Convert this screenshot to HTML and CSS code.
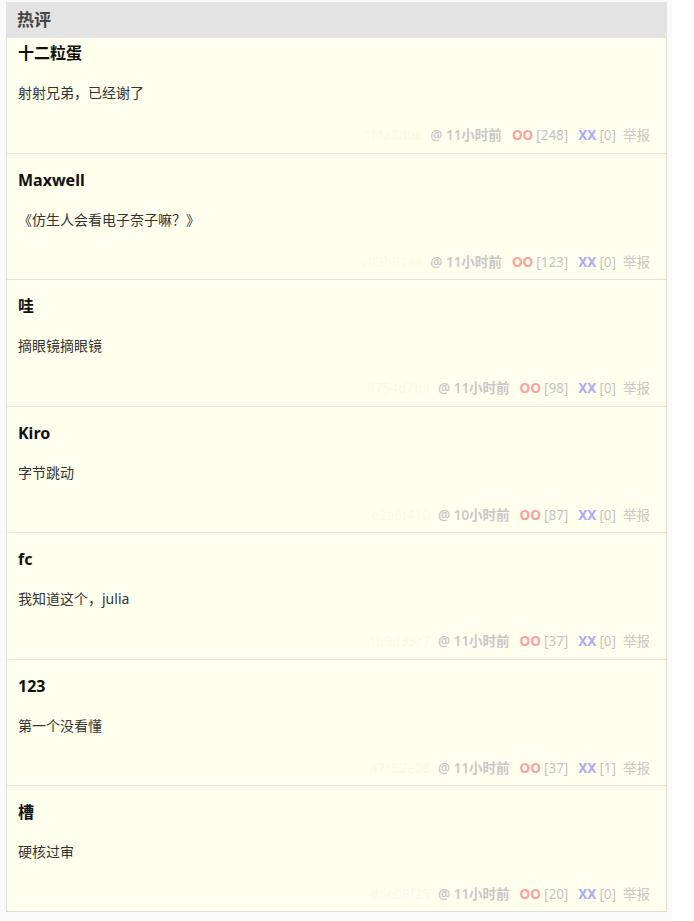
FILE: index.html
```html
<!DOCTYPE html>
<html lang="zh">
<head>
<meta charset="utf-8">
<title>热评</title>
<link rel="stylesheet" href="styles.css">
</head>
<body>
<div class="panel">
  <div class="panel-head">热评</div>
  <div class="item">
    <div class="author">十二粒蛋</div>
    <div class="text">射射兄弟，已经谢了</div>
    <div class="meta"><span class="hash">5f4a8d0e</span><span class="time">@ 11小时前</span><span class="oo">OO</span><span class="cnt">[248]</span><span class="xx">XX</span><span class="cnt">[0]</span><span class="rep">举报</span></div>
  </div>
  <div class="item">
    <div class="author">Maxwell</div>
    <div class="text">《仿生人会看电子奈子嘛？》</div>
    <div class="meta"><span class="hash">c03b91aa</span><span class="time">@ 11小时前</span><span class="oo">OO</span><span class="cnt">[123]</span><span class="xx">XX</span><span class="cnt">[0]</span><span class="rep">举报</span></div>
  </div>
  <div class="item">
    <div class="author">哇</div>
    <div class="text">摘眼镜摘眼镜</div>
    <div class="meta"><span class="hash">8754d7b3</span><span class="time">@ 11小时前</span><span class="oo">OO</span><span class="cnt">[98]</span><span class="xx">XX</span><span class="cnt">[0]</span><span class="rep">举报</span></div>
  </div>
  <div class="item">
    <div class="author">Kiro</div>
    <div class="text">字节跳动</div>
    <div class="meta"><span class="hash">e2a6f410</span><span class="time">@ 10小时前</span><span class="oo">OO</span><span class="cnt">[87]</span><span class="xx">XX</span><span class="cnt">[0]</span><span class="rep">举报</span></div>
  </div>
  <div class="item">
    <div class="author">fc</div>
    <div class="text">我知道这个，julia</div>
    <div class="meta"><span class="hash">1b9d33c7</span><span class="time">@ 11小时前</span><span class="oo">OO</span><span class="cnt">[37]</span><span class="xx">XX</span><span class="cnt">[0]</span><span class="rep">举报</span></div>
  </div>
  <div class="item">
    <div class="author">123</div>
    <div class="text">第一个没看懂</div>
    <div class="meta"><span class="hash">a7c52e08</span><span class="time">@ 11小时前</span><span class="oo">OO</span><span class="cnt">[37]</span><span class="xx">XX</span><span class="cnt">[1]</span><span class="rep">举报</span></div>
  </div>
  <div class="item">
    <div class="author">槽</div>
    <div class="text">硬核过审</div>
    <div class="meta"><span class="hash">d6e08f25</span><span class="time">@ 11小时前</span><span class="oo">OO</span><span class="cnt">[20]</span><span class="xx">XX</span><span class="cnt">[0]</span><span class="rep">举报</span></div>
  </div>
</div>
</body>
</html>
```

FILE: styles.css
```css
html {
  margin: 0;
  padding: 0;
  background: #fff;
}
body {
  margin: 0;
  width: 666px;
  min-height: 921px;
  padding: 2px 0 0 6px;
  background: #fafafa;
  font-family: "Noto Sans", "Noto Sans CJK SC", sans-serif;
  color: #222;
}
.panel {
  width: 659px;
  border-left: 1px solid #dedede;
  border-right: 1px solid #dedede;
  border-bottom: 1px solid #dedede;
  background: #ffffee;
}
.panel-head {
  height: 36px;
  line-height: 36px;
  background: #e3e3e3;
  color: #444;
  font-size: 17px;
  font-weight: bold;
  padding-left: 11px;
  margin-left: -1px;
  margin-right: -1px;
}
.item {
  padding: 14px 14px 7px 11px;
  border-top: 1px solid #e4e4e4;
}
.item:nth-child(2) {
  border-top: none;
  padding-top: 3px;
  padding-bottom: 8px;
}
.item:nth-child(4),
.item:nth-child(6) {
  padding-bottom: 8px;
}
.author {
  font-size: 16px;
  line-height: 24px;
  font-weight: bold;
  color: #111;
}
.text {
  margin-top: 18px;
  font-size: 14px;
  line-height: 20px;
  color: #333;
}
.meta {
  margin-top: 22px;
  padding-right: 2px;
  font-size: 13.5px;
  line-height: 20px;
  color: #c4c4c4;
  display: flex;
  justify-content: flex-end;
  align-items: baseline;
}
.hash {
  color: #f9f9e8;
  margin-right: 8px;
}
.time {
  font-weight: 600;
  color: #c8c8c8;
  margin-right: 10px;
}
.oo {
  font-weight: bold;
  color: #ffa0a0;
  margin-right: 3px;
}
.xx {
  font-weight: bold;
  color: #aaaaff;
  margin-right: 3px;
}
.cnt {
  margin-right: 10px;
}
.cnt + .rep {
  margin-left: -3px;
}
.rep {
  color: #c8c8c8;
}
```
